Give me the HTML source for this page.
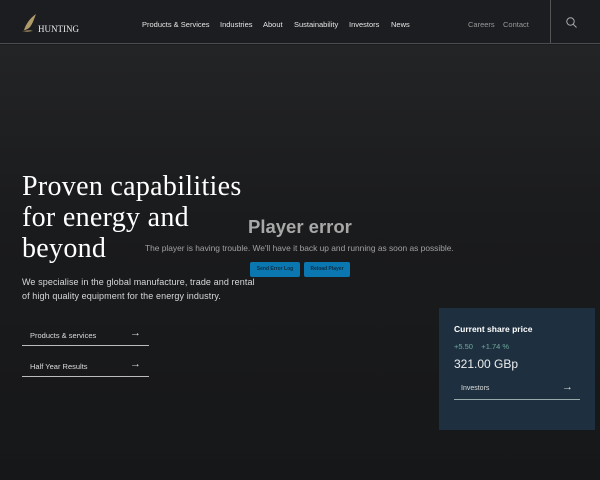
<!DOCTYPE html>
<html><head><style>
*{margin:0;padding:0;box-sizing:border-box}
body{width:600px;height:480px;overflow:hidden;background:#1b1c1e;font-family:"Liberation Sans",sans-serif;position:relative;color:#fff}
.hdr{position:absolute;left:0;top:0;width:600px;height:44px;background:#1c1d20;border-bottom:1px solid #4a4b4e}
.nav a{position:absolute;top:20px;font-size:7.5px;color:#e6e6e6}
.sep{position:absolute;left:550px;top:0;width:1px;height:43px;background:#555}
.hero{position:absolute;left:0;top:45px;width:600px;height:435px;background:linear-gradient(180deg,#232426 0%,#1a1b1d 40%,#161719 100%)}
h1{position:absolute;left:22px;top:171px;font-family:"Liberation Serif",serif;font-weight:normal;font-size:28px;line-height:31px;letter-spacing:0.3px;color:#fff}
.p{position:absolute;left:22px;top:275px;font-size:9px;line-height:14px;color:#d8d8d8;width:238px;letter-spacing:0.1px}
.btn{position:absolute;left:22px;width:127px;height:15px;border-bottom:1px solid #bbb;font-size:7.5px;color:#ddd;padding-left:8px}
.btn span{position:absolute;right:8px;top:-4px;font-size:11px}
.card{position:absolute;left:439px;top:308px;width:156px;height:122px;background:#1e3040}
</style></head><body>
<div class="hdr">
<svg style="position:absolute;left:20px;top:12px" width="22" height="22" viewBox="0 0 22 22"><path d="M4 18 C6 12 10 6 16 2 C14 7 13 11 10 15 C8 17 6 18 4 18Z" fill="#b09a6a"/><path d="M2 19 L10 18 L13 19 L7 20Z" fill="#8c7a55"/></svg>
<div style="position:absolute;left:38px;top:24px;font-family:'Liberation Serif',serif;font-size:9px;color:#eee">HUNTING</div>
<div class="nav">
<a style="left:142px">Products &amp; Services</a>
<a style="left:220px">Industries</a>
<a style="left:263px">About</a>
<a style="left:294px">Sustainability</a>
<a style="left:349px">Investors</a>
<a style="left:391px">News</a>
<a style="left:468px;color:#999">Careers</a>
<a style="left:503px;color:#999">Contact</a>
</div>
<div class="sep"></div>
<svg style="position:absolute;left:566px;top:17px" width="11" height="11" viewBox="0 0 11 11"><circle cx="4.5" cy="4.5" r="3.7" fill="none" stroke="#aaa" stroke-width="1"/><path d="M7.3 7.3 L10.5 10.5" stroke="#aaa" stroke-width="1"/></svg>
</div>
<div class="hero"></div>
<h1>Proven capabilities<br>for energy and<br>beyond</h1>
<div class="p">We specialise in the global manufacture, trade and rental<br>of high quality equipment for the energy industry.</div>
<div class="btn" style="top:331px">Products &amp; services<span>→</span></div>
<div class="btn" style="top:362px">Half Year Results<span>→</span></div>
<div style="position:absolute;left:248px;top:216px;font-size:18.5px;font-weight:bold;color:#a8a8a8">Player error</div>
<div style="position:absolute;left:145px;top:243px;font-size:8.4px;color:#a0a0a0">The player is having trouble. We'll have it back up and running as soon as possible.</div>
<div style="position:absolute;left:250px;top:262px;width:50px;height:15px;background:#0b77b0;border-radius:2px;font-size:5px;font-weight:bold;line-height:15px;text-align:center;color:#0a2d44">Send Error Log</div>
<div style="position:absolute;left:304px;top:262px;width:46px;height:15px;background:#0b77b0;border-radius:2px;font-size:5px;font-weight:bold;line-height:15px;text-align:center;color:#0a2d44">Reload Player</div>
<div class="card">
<div style="position:absolute;left:15px;top:16px;font-size:8.5px;font-weight:bold">Current share price</div>
<div style="position:absolute;left:15px;top:34px;font-size:7.5px;color:#6fa89a">+5.50 &nbsp;&nbsp; +1.74 %</div>
<div style="position:absolute;left:15px;top:49px;font-size:12px;color:#eee">321.00 GBp</div>
<div style="position:absolute;left:15px;top:77px;width:126px;height:15px;border-bottom:1px solid #9aa;font-size:7px;padding-left:7px;color:#ddd">Investors<span style="position:absolute;right:7px;top:-4px;font-size:11px">→</span></div>
</div>
</body></html>
